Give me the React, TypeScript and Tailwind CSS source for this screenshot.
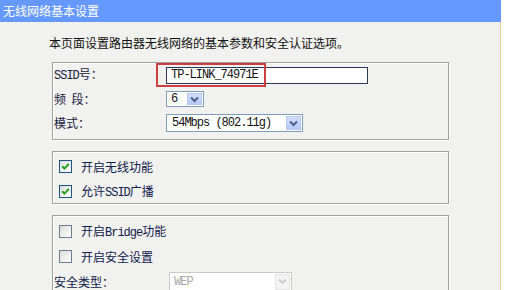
import React from "react";

const cjk = "font-['Noto_Sans_CJK_SC','Noto_Sans',sans-serif]";
const mono = "font-['Liberation_Mono','Noto_Sans_CJK_SC',monospace] text-[12px] tracking-[-1px]";

function Arrow({ disabled }: { disabled?: boolean }) {
  return (
    <div
      className={
        disabled
          ? "flex h-full w-[15px] items-center justify-center border border-[#e4e4e4] bg-[#f4f4f4]"
          : "flex h-full w-[15px] items-center justify-center border border-[#b8c8f0] bg-gradient-to-b from-[#d2defc] to-[#b6c9f6]"
      }
    >
      <svg width="9" height="7" viewBox="0 0 9 7">
        <path
          d="M1 1.5 L4.5 5 L8 1.5"
          stroke={disabled ? "#cfcfcf" : "#4d6185"}
          strokeWidth="2"
          fill="none"
        />
      </svg>
    </div>
  );
}

function Checkbox({ checked }: { checked?: boolean }) {
  return (
    <div
      className={
        checked
          ? "flex h-[13px] w-[13px] items-center justify-center border border-[#1c5180] bg-gradient-to-br from-[#dcdcd6] to-[#ffffff]"
          : "flex h-[13px] w-[13px] items-center justify-center border border-[#6a7f94] bg-gradient-to-br from-[#dcdcd6] to-[#ffffff]"
      }
    >
      {checked && (
        <svg width="9" height="9" viewBox="0 0 9 9">
          <path d="M1.2 4.2 L3.5 6.6 L7.8 1.8" stroke="#21a121" strokeWidth="2" fill="none" />
        </svg>
      )}
    </div>
  );
}

const box =
  "relative ml-[52px] w-[397px] border border-[#a0a0a0] shadow-[inset_1px_1px_0_#ffffff,1px_1px_0_#ffffff]";

export default function App() {
  return (
    <div className={`h-[290px] w-[506px] overflow-hidden bg-white text-[12px] leading-[16px] text-[#111] ${cjk}`}>
      <div className="flex h-[22px] w-[501px] items-center bg-[#6699ff] pl-[3px] text-[12px] text-white">
        无线网络基本设置
      </div>
      <div className="h-[268px] w-[501px] border-r border-[#e6c4a2] bg-[#f1f1ef]">
        <div className="ml-[49px] pt-[13px]">本页面设置路由器无线网络的基本参数和安全认证选项。</div>

        <div className={`mt-[11px] h-[78px] ${box}`}>
          <div className="flex h-[24px] items-center">
            <div className="w-[113px] pl-[1px] text-[#1a2240]">
              <span className={mono}>SSID</span>号：
            </div>
            <div className="flex h-[17px] w-[202px] items-center border border-[#2c3a5c] bg-white pl-[4px]">
              <span className={`${mono} text-[#111]`}>TP-LINK_74971E</span>
            </div>
          </div>
          <div className="flex h-[24px] items-center">
            <div className="w-[113px] pl-[1px] text-[#1a2240]">频&nbsp;&nbsp;段：</div>
            <div className="flex h-[16px] w-[38px] items-center justify-between border border-[#7f9db9] bg-white pl-[4px] pr-[1px] py-[1px]">
              <span className={mono}>6</span>
              <Arrow />
            </div>
          </div>
          <div className="flex h-[24px] items-center">
            <div className="w-[113px] pl-[1px] text-[#1a2240]">模式：</div>
            <div className="flex h-[18px] w-[137px] items-center justify-between border border-[#7f9db9] bg-white pl-[5px] pr-[1px] py-[1px]">
              <span className={mono}>54Mbps (802.11g)</span>
              <Arrow />
            </div>
          </div>
          <div className="absolute left-[103px] top-0 h-[24px] w-[110px] border-2 border-[#cc4040]" />
        </div>

        <div className={`mt-[11px] h-[53px] pt-[2px] ${box}`}>
          <div className="flex h-[25px] items-center pl-[6px]">
            <Checkbox checked />
            <span className="ml-[9px] text-[#10204a]">开启无线功能</span>
          </div>
          <div className="flex h-[25px] items-center pl-[6px]">
            <Checkbox checked />
            <span className="ml-[9px] text-[#10204a]">
              允许<span className={mono}>SSID</span>广播
            </span>
          </div>
        </div>

        <div className={`mt-[11px] h-[100px] pt-[3px] ${box}`}>
          <div className="flex h-[25px] items-center pl-[6px]">
            <Checkbox />
            <span className="ml-[9px] text-[#10204a]">
              开启<span className={mono}>Bridge</span>功能
            </span>
          </div>
          <div className="flex h-[25px] items-center pl-[6px]">
            <Checkbox />
            <span className="ml-[9px] text-[#10204a]">开启安全设置</span>
          </div>
          <div className="flex h-[25px] items-center">
            <div className="w-[116px] pl-[1px] text-[#10204a]">安全类型：</div>
            <div className="flex h-[20px] w-[123px] items-center justify-between border border-[#c9c9c9] bg-white pl-[4px] pr-[1px] py-[1px]">
              <span className={`${mono} text-[#a8a8a8]`}>WEP</span>
              <Arrow disabled />
            </div>
          </div>
        </div>
      </div>
    </div>
  );
}
